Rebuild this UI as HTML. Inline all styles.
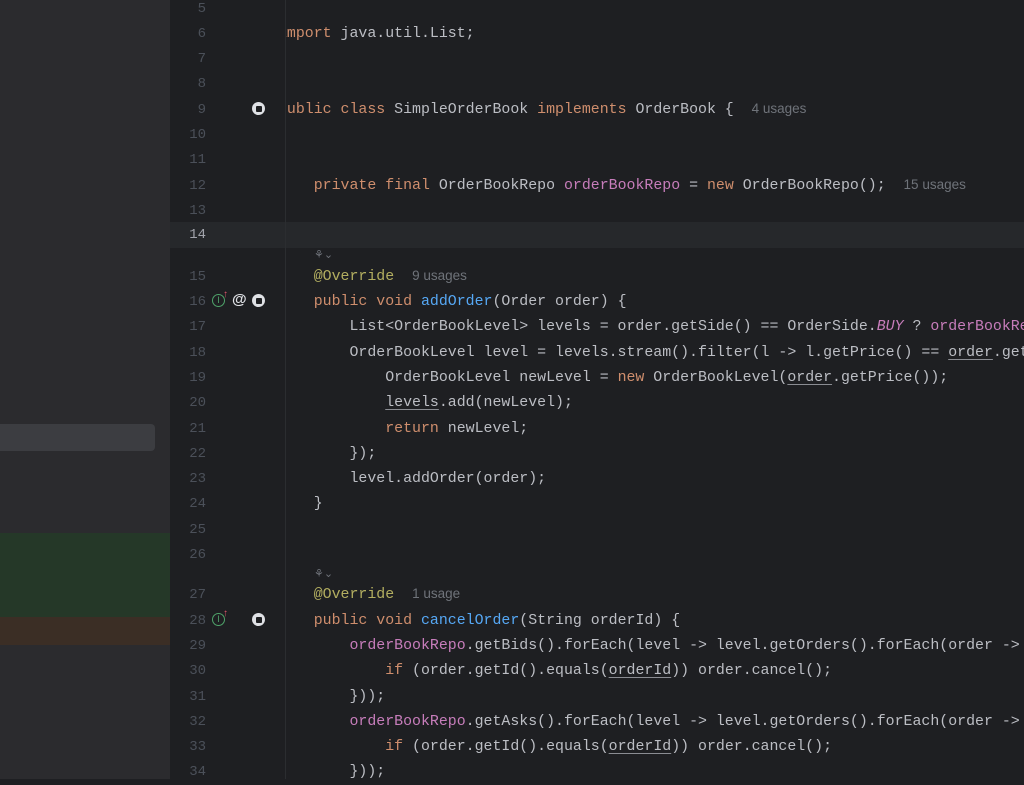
<!DOCTYPE html>
<html><head><meta charset="utf-8"><style>
html,body{margin:0;padding:0;width:1024px;height:779px;overflow:hidden;background:#1e1f22;}
.left{position:absolute;left:0;top:0;width:170px;height:779px;background:#2b2b2e;}
.ln{position:absolute;left:170px;width:36px;text-align:right;font:14px "Liberation Mono",monospace;color:#4b5059;height:25px;line-height:25px;margin-top:2px;}
.code{position:absolute;left:286px;top:0;width:738px;height:779px;overflow:hidden;}
.l{position:absolute;left:-8px;white-space:pre;font:14.9px "Liberation Mono",monospace;color:#bcbec4;height:25px;line-height:25px;margin-top:2px;}
.k{color:#cf8e6d}.m{color:#56a8f5}.f{color:#c77dbb}.a{color:#b3ae60}.i{color:#c77dbb;font-style:italic}
.u{text-decoration:underline;text-decoration-color:#8a8c92;text-underline-offset:3px}
.h{font:13.5px "Liberation Sans",sans-serif;color:#6f737a;}
.ic{position:absolute;width:13px;height:13px;border-radius:50%;background:#dfe1e5;}
.ic::after{content:"";position:absolute;left:3.5px;top:3.5px;width:6px;height:6px;background:#1e1f22;border-radius:1px;}
.gi{position:absolute;width:11px;height:11px;border:1.5px solid #4fa36a;border-radius:50%;color:#4fa36a;font:9px "Liberation Sans",sans-serif;text-align:center;line-height:11px;}
.ar{position:absolute;color:#e0566a;font:10px "Liberation Sans",sans-serif;}
.at{position:absolute;color:#dfe1e5;font:bold 15px "Liberation Sans",sans-serif;}
.ai{position:absolute;color:#6f737a;font:11px "Liberation Sans",sans-serif;}
</style></head><body>
<div class="left">
<div style="position:absolute;left:0;top:424px;width:155px;height:27px;background:#3c3d41;border-radius:0 4px 4px 0"></div>
<div style="position:absolute;left:0;top:533px;width:170px;height:84px;background:#253828"></div>
<div style="position:absolute;left:0;top:617px;width:170px;height:28px;background:#3b2e25"></div>
</div>
<div style="position:absolute;left:170px;top:222px;width:854px;height:26px;background:#26282b"></div>
<div style="position:absolute;left:285px;top:0;width:1px;height:779px;background:#2b2d30"></div>

<div class="ln" style="top:-5px">5</div>
<div class="ln" style="top:20px">6</div>
<div class="ln" style="top:45px">7</div>
<div class="ln" style="top:70px">8</div>
<div class="ln" style="top:96px">9</div>
<div class="ln" style="top:121px">10</div>
<div class="ln" style="top:146px">11</div>
<div class="ln" style="top:172px">12</div>
<div class="ln" style="top:197px">13</div>
<div class="ln" style="top:221px;color:#a1a3ab">14</div>
<div class="ln" style="top:263px">15</div>
<div class="ln" style="top:288px">16</div>
<div class="ln" style="top:313px">17</div>
<div class="ln" style="top:339px">18</div>
<div class="ln" style="top:364px">19</div>
<div class="ln" style="top:389px">20</div>
<div class="ln" style="top:415px">21</div>
<div class="ln" style="top:440px">22</div>
<div class="ln" style="top:465px">23</div>
<div class="ln" style="top:490px">24</div>
<div class="ln" style="top:516px">25</div>
<div class="ln" style="top:541px">26</div>
<div class="ln" style="top:581px">27</div>
<div class="ln" style="top:607px">28</div>
<div class="ln" style="top:632px">29</div>
<div class="ln" style="top:657px">30</div>
<div class="ln" style="top:683px">31</div>
<div class="ln" style="top:708px">32</div>
<div class="ln" style="top:733px">33</div>
<div class="ln" style="top:758px">34</div>

<div class="ic" style="left:252px;top:102px"></div>
<div class="gi" style="left:212px;top:294px">I</div><div class="ar" style="left:223px;top:289px">↑</div>
<div class="at" style="left:232px;top:291px">@</div>
<div class="ic" style="left:252px;top:294px"></div>
<div class="gi" style="left:212px;top:613px">I</div><div class="ar" style="left:223px;top:608px">↑</div>
<div class="ic" style="left:252px;top:613px"></div>

<div class="code">
<div class="l" style="top:20px"><span class="k">import</span> java.util.List;</div>
<div class="l" style="top:96px"><span class="k">public class</span> SimpleOrderBook <span class="k">implements</span> OrderBook {  <span class="h">4 usages</span></div>
<div class="l" style="top:172px">    <span class="k">private final</span> OrderBookRepo <span class="f">orderBookRepo</span> = <span class="k">new</span> OrderBookRepo();  <span class="h">15 usages</span></div>
<div class="ai" style="left:28px;top:248px">⚘⌄</div>
<div class="l" style="top:263px">    <span class="a">@Override</span>  <span class="h">9 usages</span></div>
<div class="l" style="top:288px">    <span class="k">public void</span> <span class="m">addOrder</span>(Order order) {</div>
<div class="l" style="top:313px">        List&lt;OrderBookLevel&gt; levels = order.getSide() == OrderSide.<span class="i">BUY</span> ? <span class="f">orderBookRepo</span></div>
<div class="l" style="top:339px">        OrderBookLevel level = levels.stream().filter(l -&gt; l.getPrice() == <span class="u">order</span>.getPrice</div>
<div class="l" style="top:364px">            OrderBookLevel newLevel = <span class="k">new</span> OrderBookLevel(<span class="u">order</span>.getPrice());</div>
<div class="l" style="top:389px">            <span class="u">levels</span>.add(newLevel);</div>
<div class="l" style="top:415px">            <span class="k">return</span> newLevel;</div>
<div class="l" style="top:440px">        });</div>
<div class="l" style="top:465px">        level.addOrder(order);</div>
<div class="l" style="top:490px">    }</div>
<div class="ai" style="left:28px;top:567px">⚘⌄</div>
<div class="l" style="top:581px">    <span class="a">@Override</span>  <span class="h">1 usage</span></div>
<div class="l" style="top:607px">    <span class="k">public void</span> <span class="m">cancelOrder</span>(String orderId) {</div>
<div class="l" style="top:632px">        <span class="f">orderBookRepo</span>.getBids().forEach(level -&gt; level.getOrders().forEach(order -&gt; {</div>
<div class="l" style="top:657px">            <span class="k">if</span> (order.getId().equals(<span class="u">orderId</span>)) order.cancel();</div>
<div class="l" style="top:683px">        }));</div>
<div class="l" style="top:708px">        <span class="f">orderBookRepo</span>.getAsks().forEach(level -&gt; level.getOrders().forEach(order -&gt; {</div>
<div class="l" style="top:733px">            <span class="k">if</span> (order.getId().equals(<span class="u">orderId</span>)) order.cancel();</div>
<div class="l" style="top:758px">        }));</div>
</div>
</body></html>
